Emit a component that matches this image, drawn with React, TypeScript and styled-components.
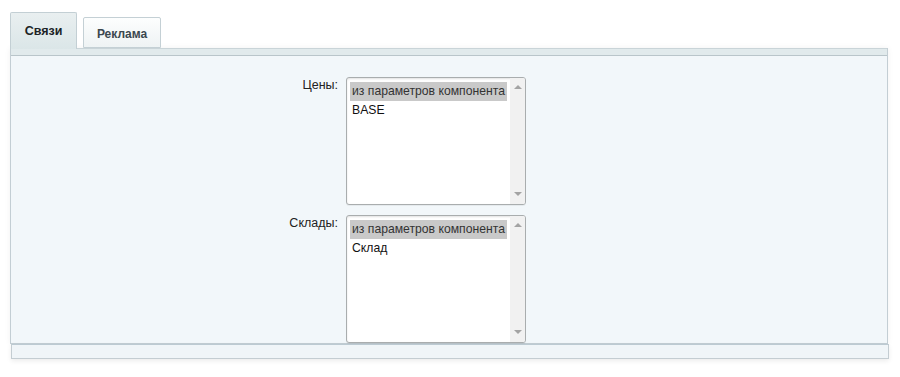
import React from 'react';
import styled, { createGlobalStyle } from 'styled-components';

const GlobalStyle = createGlobalStyle`
  body {
    margin: 0;
    background: #ffffff;
    font-family: "Liberation Sans", Arial, sans-serif;
  }
`;

const Page = styled.div`
  width: 900px;
  height: 377px;
  padding: 12px 11px 0 10px;
  box-sizing: border-box;
`;

const TabBar = styled.div`
  display: flex;
  align-items: flex-end;
  gap: 6px;
  height: 36px;
  position: relative;
  z-index: 2;
`;

const Tab = styled.div<{ $active?: boolean }>`
  box-sizing: border-box;
  height: ${p => (p.$active ? '37px' : '31px')};
  width: ${p => (p.$active ? '67px' : '78px')};
  margin-bottom: ${p => (p.$active ? '-1px' : '0')};
  border: 1px solid ${p => (p.$active ? '#c3cfd4' : '#c4d0d5')};
  border-bottom: ${p => (p.$active ? 'none' : '1px solid #c4d0d5')};
  border-radius: 2px 2px 0 0;
  background: ${p =>
    p.$active
      ? 'linear-gradient(#e9eff0, #dbe6e8)'
      : 'linear-gradient(#fdfefe, #eef3f4)'};
  display: flex;
  align-items: center;
  justify-content: center;
  padding-top: ${p => (p.$active ? '0' : '2px')};
  font-size: ${p => (p.$active ? '12.5px' : '12px')};
  font-weight: bold;
  color: ${p => (p.$active ? '#1c2326' : '#3b474e')};
`;

const Panel = styled.div`
  box-sizing: border-box;
  width: 878px;
  border: 1px solid #c3ced4;
  border-top: none;
  background: #f2f7fa;
  box-shadow: 0 0 6px rgba(0, 0, 0, 0.06);
`;

const Strip = styled.div`
  height: 6px;
  border-top: 1px solid #c9d4d8;
  border-bottom: 1px solid #b9c5ca;
  background: #e1eaec;
`;

const Form = styled.div`
  display: grid;
  grid-template-columns: 327px 180px;
  column-gap: 8px;
  row-gap: 10px;
  padding: 21px 0 0 0;
`;

const Label = styled.div`
  text-align: right;
  font-size: 12.5px;
  color: #222;
  padding-top: 1px;
`;

const ListBox = styled.div`
  box-sizing: border-box;
  height: 128px;
  border: 1px solid #a9adae;
  border-radius: 3px;
  background: #fff;
  box-shadow: inset 0 1px 2px rgba(0, 0, 0, 0.12), 0 1px 0 rgba(0, 0, 0, 0.05);
  display: flex;
  overflow: hidden;
`;

const Options = styled.div`
  flex: 1;
  min-width: 0;
  padding: 4px 3px 0 3px;
`;

const Option = styled.div<{ $selected?: boolean }>`
  height: 19px;
  line-height: 19px;
  padding-left: 2px;
  font-size: 12.2px;
  white-space: nowrap;
  overflow: hidden;
  background: ${p => (p.$selected ? '#c9c9c9' : 'transparent')};
  color: ${p => (p.$selected ? '#333' : '#111')};
`;

const Scrollbar = styled.div`
  width: 15px;
  background: #f1f1f1;
  display: flex;
  flex-direction: column;
  justify-content: space-between;
  align-items: center;
  padding: 7px 0 8px;
`;

const Arrow = styled.div<{ $down?: boolean }>`
  width: 0;
  height: 0;
  border-left: 4px solid transparent;
  border-right: 4px solid transparent;
  border-bottom: ${p => (p.$down ? 'none' : '4px solid #a3a3a3')};
  border-top: ${p => (p.$down ? '4px solid #a3a3a3' : 'none')};
`;

const Footer = styled.div`
  box-sizing: border-box;
  width: 878px;
  height: 15px;
  margin-left: 1px;
  border: 1px solid #c4cdd2;
  border-top: 1px solid #bccad2;
  background: #f0f5f8;
  box-shadow: 0 2px 5px rgba(0, 0, 0, 0.08);
`;

interface Field {
  label: string;
  options: string[];
}

const fields: Field[] = [
  { label: 'Цены:', options: ['из параметров компонента', 'BASE'] },
  { label: 'Склады:', options: ['из параметров компонента', 'Склад'] },
];

const App: React.FC = () => {
  return (
    <Page>
      <GlobalStyle />
      <TabBar>
        <Tab $active>Связи</Tab>
        <Tab>Реклама</Tab>
      </TabBar>
      <Panel>
        <Strip />
        <Form>
          {fields.map(field => (
            <React.Fragment key={field.label}>
              <Label>{field.label}</Label>
              <ListBox>
                <Options>
                  {field.options.map((opt, i) => (
                    <Option key={opt} $selected={i === 0}>
                      {opt}
                    </Option>
                  ))}
                </Options>
                <Scrollbar>
                  <Arrow />
                  <Arrow $down />
                </Scrollbar>
              </ListBox>
            </React.Fragment>
          ))}
        </Form>
      </Panel>
      <Footer />
    </Page>
  );
};

export default App;
